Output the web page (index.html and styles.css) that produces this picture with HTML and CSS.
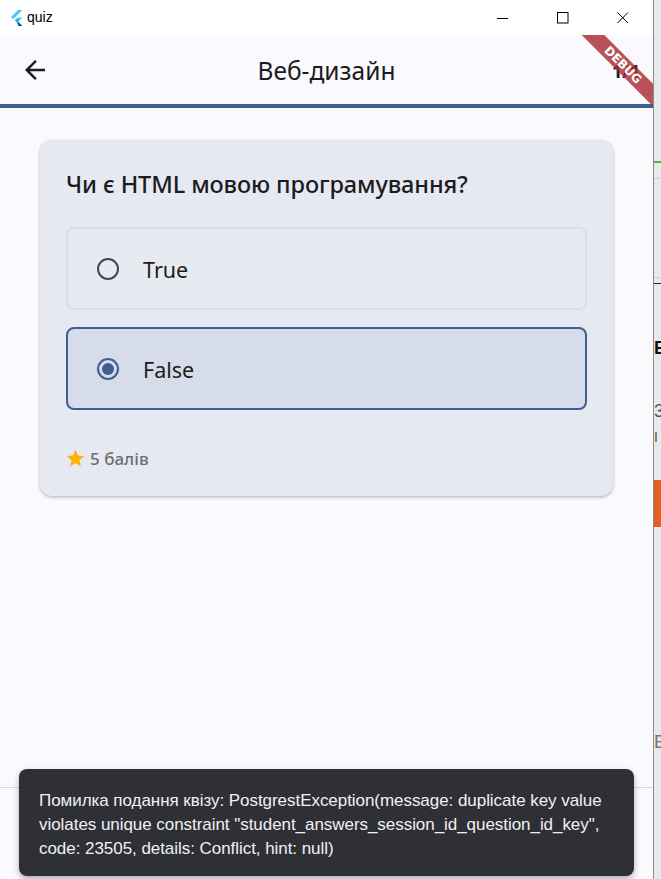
FILE: index.html
```html
<!DOCTYPE html>
<html lang="uk">
<head>
<meta charset="utf-8">
<title>quiz</title>
<link rel="stylesheet" href="styles.css">
</head>
<body>
<div class="screen">
  <div class="window">
    <div class="titlebar">
      <div class="tb-left">
        <svg class="flutter-logo" width="13" height="16" viewBox="0 0 13 16">
          <polygon points="8,0 12.5,0 3.2,9.3 1,7" fill="#54c5f8"/>
          <polygon points="8,7.4 12.5,7.4 7.3,12.6 5,10.3" fill="#54c5f8"/>
          <polygon points="5,10.3 7.3,12.6 8.4,16 12.5,16 7.3,10.9" fill="#01579b"/>
          <polygon points="5,10.3 7.3,8 9.6,10.3 7.3,12.6" fill="#29b6f6"/>
        </svg>
        <span class="app-name">quiz</span>
      </div>
      <div class="tb-controls">
        <span class="ctl"><svg width="12" height="12" viewBox="0 0 12 12"><line x1="0" y1="6.5" x2="11" y2="6.5" stroke="#000" stroke-width="1"/></svg></span>
        <span class="ctl"><svg width="12" height="12" viewBox="0 0 12 12"><rect x="0.5" y="0.5" width="10.5" height="10.5" fill="none" stroke="#000" stroke-width="1"/></svg></span>
        <span class="ctl"><svg width="12" height="12" viewBox="0 0 12 12"><path d="M0.5 0.5 L11 11 M11 0.5 L0.5 11" stroke="#000" stroke-width="1"/></svg></span>
      </div>
    </div>
    <div class="app">
      <header class="appbar">
        <span class="back">
          <svg width="30" height="30" viewBox="0 0 24 24"><path d="M20 11H7.83l5.59-5.59L12 4l-8 8 8 8 1.41-1.41L7.83 13H20v-2z" fill="#1d1b20"/></svg>
        </span>
        <h1 class="title">Веб-дизайн</h1>
        <span class="counter">1/1</span>
      </header>
      <div class="progress"></div>
      <main class="content">
        <section class="card">
          <h2 class="question">Чи є HTML мовою програмування?</h2>
          <div class="options">
            <div class="option">
              <span class="radio"></span>
              <span class="opt-text">True</span>
            </div>
            <div class="option selected">
              <span class="radio on"></span>
              <span class="opt-text">False</span>
            </div>
          </div>
          <div class="points">
            <svg width="21" height="21" viewBox="0 0 24 24"><path d="M12 17.27L18.18 21l-1.64-7.03L22 9.24l-7.19-.61L12 2 9.19 8.63 2 9.24l5.46 4.73L5.82 21z" fill="#ffb300"/></svg>
            <span>5 балів</span>
          </div>
        </section>
      </main>
      <div class="bottombar"></div>
      <div class="snackbar">Помилка подання квізу: PostgrestException(message: duplicate key value<br>violates unique constraint "student_answers_session_id_question_id_key",<br>code: 23505, details: Conflict, hint: null)</div>
      <div class="debug-ribbon">DEBUG</div>
    </div>
  </div>
  <div class="behind">
    <span class="bg-green"></span>
    <span class="bg-faint f1"></span>
    <span class="bg-faint f2"></span>
    <span class="bg-black"></span>
    <span class="bg-e">E</span>
    <span class="bg-3">3</span>
    <span class="bg-i">I</span>
    <span class="bg-orange"></span>
    <span class="bg-b">В</span>
  </div>
</div>
</body>
</html>
```

FILE: styles.css
```css
* { box-sizing: border-box; }
html, body { margin: 0; padding: 0; }
body {
  width: 661px;
  height: 879px;
  overflow: hidden;
  font-family: "Noto Sans", "Open Sans", sans-serif;
  background: #ececec;
}
.screen {
  display: flex;
  height: 879px;
}
.window {
  width: 654px;
  height: 879px;
  display: flex;
  flex-direction: column;
  border-right: 1px solid #8c8c8c;
  flex: none;
}
.titlebar {
  height: 35px;
  background: #ffffff;
  display: flex;
  align-items: center;
  justify-content: space-between;
  flex: none;
}
.tb-left {
  display: flex;
  align-items: center;
  padding-left: 10px;
  gap: 4px;
}
.app-name {
  font-family: "Liberation Sans", sans-serif;
  font-size: 14px;
  color: #000;
  position: relative;
  top: -1px;
}
.tb-controls {
  display: flex;
  align-items: center;
  height: 35px;
}
.ctl {
  width: 60px;
  height: 35px;
  display: flex;
  align-items: center;
  justify-content: center;
}
.ctl svg { display: block; }
.app {
  flex: 1;
  position: relative;
  overflow: hidden;
  background: #f9f9fe;
  display: flex;
  flex-direction: column;
}
.appbar {
  height: 69px;
  display: grid;
  grid-template-columns: 70px 1fr 70px;
  align-items: center;
  flex: none;
}
.back {
  display: flex;
  justify-content: center;
}
.back svg { display: block; }
.title {
  margin: 0;
  text-align: center;
  font-size: 24.5px;
  font-weight: 400;
  color: #1d1b20;
  position: relative;
  top: 1px;
}
.counter {
  font-size: 18px;
  font-weight: 700;
  color: #1d1b20;
  text-align: right;
  padding-right: 13px;
  position: relative;
  top: 1px;
}
.progress {
  height: 4px;
  background: #3e5f8f;
  flex: none;
}
.content {
  flex: 1;
  padding: 32px 40px;
}
.card {
  background: #e7e9f2;
  border-radius: 12px;
  box-shadow: 0 1px 3px rgba(0,0,0,0.22), 0 2px 4px rgba(0,0,0,0.08);
  padding: 25px 26px 24px;
  height: 356px;
}
.question {
  margin: 0;
  font-size: 23.5px;
  font-weight: 500;
  line-height: 38px;
  color: #1d1b20;
  letter-spacing: -0.1px;
}
.options {
  display: flex;
  flex-direction: column;
  gap: 17px;
  margin-top: 24px;
}
.option {
  height: 83px;
  border: 2px solid #dcdee5;
  border-radius: 8px;
  background: #e8eaf2;
  display: flex;
  align-items: center;
  padding-left: 29px;
  gap: 24px;
}
.option.selected {
  border-color: #3d5e8f;
  background: #d6dce9;
}
.radio {
  width: 22px;
  height: 22px;
  border-radius: 50%;
  border: 2px solid #49454f;
  flex: none;
  position: relative;
}
.radio.on {
  border-color: #3d5e8f;
}
.radio.on::after {
  content: "";
  position: absolute;
  left: 3px;
  top: 3px;
  width: 12px;
  height: 12px;
  border-radius: 50%;
  background: #3d5e8f;
}
.opt-text {
  font-size: 21.5px;
  color: #1d1b20;
  position: relative;
  top: 1px;
}
.points {
  display: flex;
  align-items: center;
  gap: 4px;
  margin-top: 37px;
  margin-left: -1px;
  font-size: 17px;
  font-weight: 500;
  color: #6e6e72;
}
.points svg { display: block; }
.bottombar {
  height: 92px;
  border-top: 1px solid #d8d8dc;
  flex: none;
}
.snackbar {
  position: absolute;
  left: 19px;
  right: 19px;
  bottom: 3px;
  background: #2f3035;
  color: #f2eff4;
  border-radius: 8px;
  padding: 20px 20px 15px;
  font-family: "Liberation Sans", sans-serif;
  font-size: 17px;
  line-height: 24px;
  letter-spacing: -0.05px;
  box-shadow: 0 3px 6px rgba(0,0,0,0.3);
}
.debug-ribbon {
  position: absolute;
  left: 538px;
  top: 22px;
  width: 170px;
  height: 16px;
  transform: rotate(45deg);
  background: rgba(168, 40, 45, 0.8);
  color: #fff;
  font-family: "DejaVu Sans", sans-serif;
  font-weight: 700;
  font-size: 12px;
  line-height: 16px;
  text-align: center;
}
.behind {
  flex: 1;
  position: relative;
  background: #e9e9e9;
  overflow: hidden;
}
.behind span { position: absolute; left: 0; }
.bg-green { top: 161px; width: 7px; height: 2px; background: #4caf50; }
.bg-faint { width: 7px; height: 1px; background: #cfcfcf; }
.f1 { top: 178px; }
.f2 { top: 277px; }
.bg-black { top: 283px; width: 7px; height: 1px; background: #222; }
.bg-e, .bg-3, .bg-i, .bg-b {
  font-family: "Liberation Sans", sans-serif;
  font-size: 18px;
  line-height: 18px;
}
.bg-e { top: 339px; font-weight: 700; color: #111; }
.bg-3 { top: 402px; color: #555; }
.bg-i { top: 428px; color: #555; font-size: 14px; }
.bg-orange { top: 480px; width: 7px; height: 47px; background: #e5601f; }
.bg-b { top: 733px; color: #777; }
```
